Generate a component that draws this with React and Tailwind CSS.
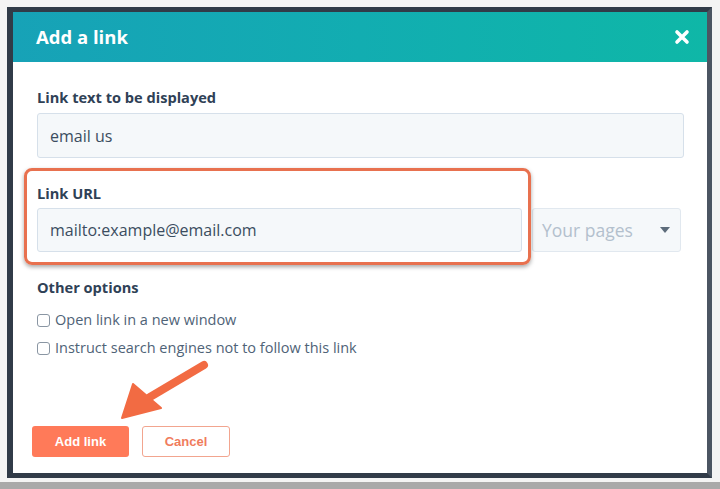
import React from "react";

function CloseIcon() {
  return (
    <svg width="16" height="16" viewBox="0 0 16 16" className="block">
      <path d="M3 3 L13 13 M13 3 L3 13" stroke="white" strokeWidth="3.6" strokeLinecap="round" />
    </svg>
  );
}

function Checkbox({ label }) {
  return (
    <label className="flex items-center h-[28px] gap-[5px]">
      <span className="w-[13px] h-[13px] rounded-[3px] border border-[#8a96a3] bg-white" />
      <span className="text-[14.5px] text-[#4f6377]">{label}</span>
    </label>
  );
}

export default function App() {
  return (
    <div
      className="relative w-[720px] h-[489px] bg-[#f4f4f4] overflow-hidden"
      style={{ fontFamily: "'Open Sans', Lato, sans-serif" }}
    >
      <div className="pt-[7px] pl-[7px]">
        {/* dark frame */}
        <div className="w-[705px] h-[471px] border-[5px] border-l-[6px] border-[#313b48] border-r-[#4b5562] bg-white flex flex-col">
          {/* header */}
          <div className="h-[50px] shrink-0 flex items-center justify-between pl-[23px] pr-[17px] bg-gradient-to-r from-[#17a2b7] via-[#12adb1] to-[#0fb7a7]">
            <h1 className="text-[18.5px] font-bold text-white">Add a link</h1>
            <CloseIcon />
          </div>

          {/* body */}
          <div className="flex-1 pl-[24px] pr-[23px] pt-[25px]">
            <div className="text-[14.6px] font-bold text-[#2f4156] leading-[20px]">Link text to be displayed</div>
            <div className="mt-[6px] h-[45px] rounded-[3px] border border-[#d6e0ea] bg-[#f5f8fa] flex items-center px-[12px]">
              <span className="text-[16px] text-[#3b4d60]">email us</span>
            </div>

            <div className="mt-[25px] text-[14.6px] font-bold text-[#2f4156] leading-[20px]">Link URL</div>
            <div className="mt-[5px] flex gap-[10px] pr-[3px]">
              <div className="w-[485px] h-[44px] rounded-[3px] border border-[#d6e0ea] bg-[#f5f8fa] flex items-center px-[12px]">
                <span className="text-[16px] text-[#3b4d60]">mailto:example@email.com</span>
              </div>
              <div className="flex-1 h-[44px] rounded-[3px] border border-[#e1e8ef] bg-[#f5f8fa] flex items-center justify-between pl-[9px] pr-[10px]">
                <span className="text-[17.5px] text-[#b3c0cd]">Your pages</span>
                <span className="w-0 h-0 border-l-[5px] border-r-[5px] border-t-[6px] border-l-transparent border-r-transparent border-t-[#5d6c7b]" />
              </div>
            </div>

            <div className="mt-[25px] text-[14.6px] font-bold text-[#2f4156] leading-[20px]">Other options</div>
            <div className="mt-[9px] flex flex-col">
              <Checkbox label="Open link in a new window" />
              <Checkbox label="Instruct search engines not to follow this link" />
            </div>

            <div className="mt-[64px] -ml-[5px] flex gap-[13px]">
              <button
                className="w-[97px] h-[31px] rounded-[3px] bg-[#ff7a59] text-white text-[13px] font-bold"
                style={{ fontFamily: "'Liberation Sans', Arial, sans-serif" }}
              >
                Add link
              </button>
              <button
                className="w-[88px] h-[31px] rounded-[3px] border border-[#f2a58f] bg-white text-[#f07c5d] text-[13px] font-bold"
                style={{ fontFamily: "'Liberation Sans', Arial, sans-serif" }}
              >
                Cancel
              </button>
            </div>
          </div>
        </div>
      </div>

      {/* bottom shadow band */}
      <div className="absolute left-0 right-0 bottom-0 h-[7px] bg-[#a9a9a9]" />

      {/* annotation: highlight box */}
      <div className="absolute left-[24px] top-[168px] w-[507px] h-[97px] rounded-[8px] border-[3px] border-[#e8714f] shadow-[0_2px_4px_rgba(0,0,0,0.35)]" />

      {/* annotation: arrow */}
      <svg className="absolute left-0 top-0" width="720" height="489" viewBox="0 0 720 489">
        <line x1="204" y1="365" x2="150" y2="397" stroke="#f26b43" strokeWidth="8" strokeLinecap="round" />
        <polygon points="122,418 133,384 161,408" fill="#f26b43" stroke="#f26b43" strokeWidth="2" strokeLinejoin="round" />
      </svg>
    </div>
  );
}
